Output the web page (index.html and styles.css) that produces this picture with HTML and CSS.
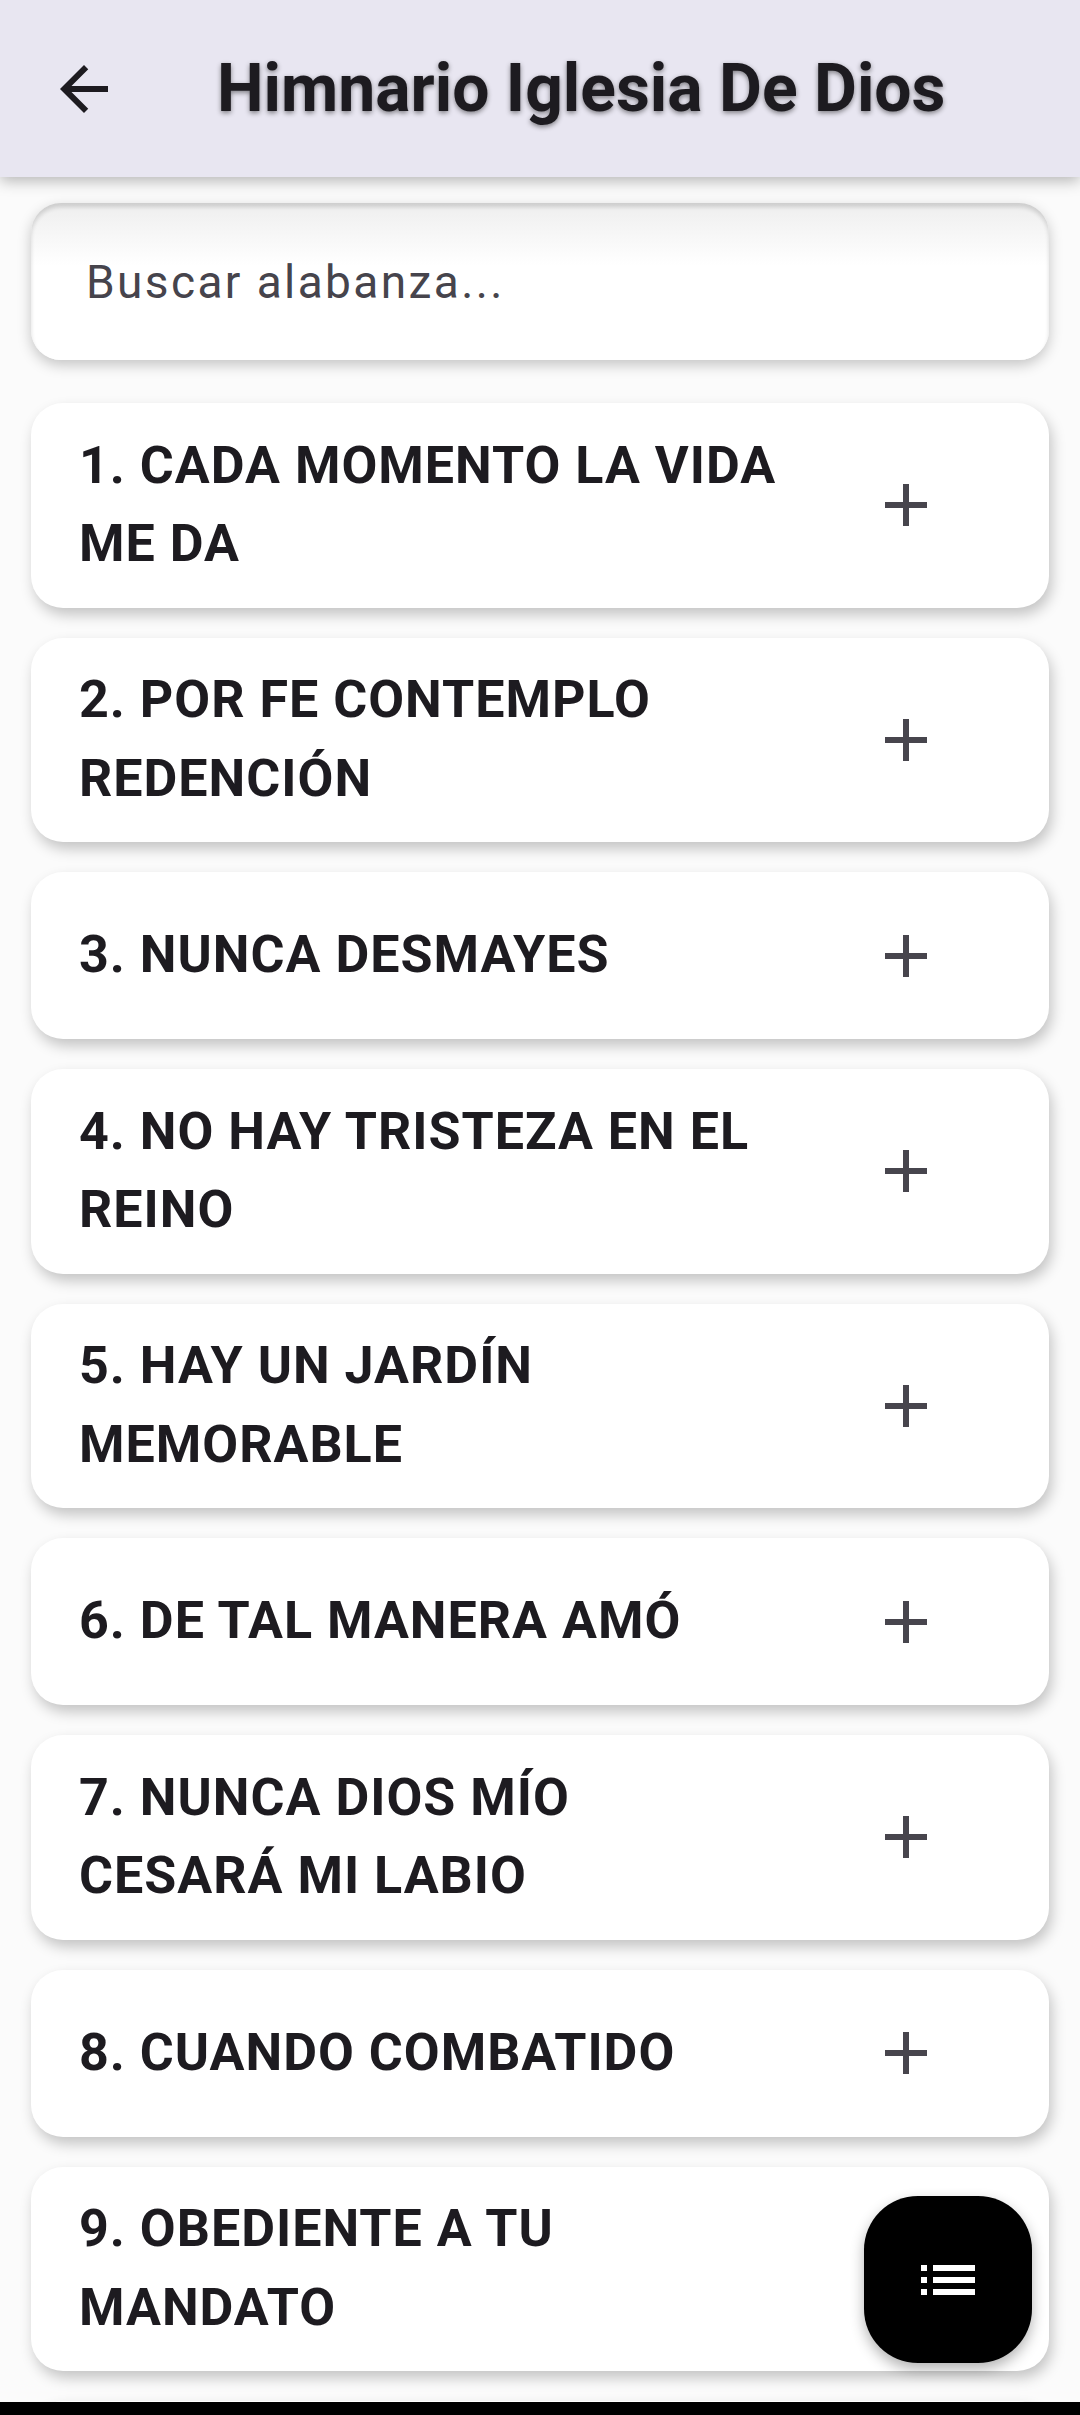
FILE: index.html
```html
<!DOCTYPE html>
<html lang="es">
<head>
<meta charset="utf-8">
<title>Himnario Iglesia De Dios</title>
<link rel="stylesheet" href="styles.css">
</head>
<body>
<header class="appbar">
  <button class="back" aria-label="Volver">
    <svg viewBox="0 0 24 24" width="72" height="72"><path d="M20 11H7.83l5.59-5.59L12 4l-8 8 8 8 1.41-1.41L7.83 13H20v-2z" fill="#1d1b20"/></svg>
  </button>
  <h1 class="title">Himnario Iglesia De Dios</h1>
</header>
<main class="content">
  <div class="search">
    <span class="placeholder">Buscar alabanza...</span>
  </div>
  <ul class="list">
    <li class="card"><span class="name">1. CADA MOMENTO LA VIDA ME DA</span><svg class="plus" viewBox="0 0 24 24"><path d="M19 13h-6v6h-2v-6H5v-2h6V5h2v6h6v2z"/></svg></li>
    <li class="card"><span class="name">2. POR FE CONTEMPLO REDENCIÓN</span><svg class="plus" viewBox="0 0 24 24"><path d="M19 13h-6v6h-2v-6H5v-2h6V5h2v6h6v2z"/></svg></li>
    <li class="card"><span class="name">3. NUNCA DESMAYES</span><svg class="plus" viewBox="0 0 24 24"><path d="M19 13h-6v6h-2v-6H5v-2h6V5h2v6h6v2z"/></svg></li>
    <li class="card"><span class="name">4. NO HAY TRISTEZA EN EL REINO</span><svg class="plus" viewBox="0 0 24 24"><path d="M19 13h-6v6h-2v-6H5v-2h6V5h2v6h6v2z"/></svg></li>
    <li class="card"><span class="name">5. HAY UN JARDÍN MEMORABLE</span><svg class="plus" viewBox="0 0 24 24"><path d="M19 13h-6v6h-2v-6H5v-2h6V5h2v6h6v2z"/></svg></li>
    <li class="card"><span class="name">6. DE TAL MANERA AMÓ</span><svg class="plus" viewBox="0 0 24 24"><path d="M19 13h-6v6h-2v-6H5v-2h6V5h2v6h6v2z"/></svg></li>
    <li class="card"><span class="name">7. NUNCA DIOS MÍO CESARÁ MI LABIO</span><svg class="plus" viewBox="0 0 24 24"><path d="M19 13h-6v6h-2v-6H5v-2h6V5h2v6h6v2z"/></svg></li>
    <li class="card"><span class="name">8. CUANDO COMBATIDO</span><svg class="plus" viewBox="0 0 24 24"><path d="M19 13h-6v6h-2v-6H5v-2h6V5h2v6h6v2z"/></svg></li>
    <li class="card"><span class="name">9. OBEDIENTE A TU MANDATO</span><svg class="plus" viewBox="0 0 24 24"><path d="M19 13h-6v6h-2v-6H5v-2h6V5h2v6h6v2z"/></svg></li>
    <li class="card card-empty"></li>
  </ul>
</main>
<button class="fab" aria-label="Índice">
  <svg viewBox="0 0 24 24" width="72" height="72"><path d="M3 13h2v-2H3v2zm0 4h2v-2H3v2zm0-8h2V7H3v2zm4 4h14v-2H7v2zm0 4h14v-2H7v2zM7 7v2h14V7H7z" fill="#fff"/></svg>
</button>
<div class="navbar"></div>
</body>
</html>
```
FILE: styles.css
```css
html, body {
  margin: 0;
  padding: 0;
}
body {
  background: #fbfbfb;
  font-family: Roboto, "Noto Sans", "Liberation Sans", sans-serif;
  color: #1d1b20;
  height: 2415px;
  overflow: hidden;
}
.appbar {
  position: relative;
  z-index: 2;
  height: 177px;
  background: #e8e6f1;
  display: flex;
  align-items: center;
  box-shadow: 0 4px 14px rgba(0, 0, 0, 0.28);
}
.back {
  margin-left: 48px;
  width: 72px;
  height: 72px;
  padding: 0;
  border: 0;
  background: transparent;
  display: flex;
}
.title {
  margin: 0 0 0 97px;
  font-size: 66px;
  font-weight: 700;
  letter-spacing: 0;
  color: #1d1b20;
  text-shadow: 0 2px 5px rgba(0, 0, 0, 0.45);
  line-height: 1;
}
.content {
  padding: 26px 31px 0;
}
.search {
  height: 157px;
  background: linear-gradient(#eeeeee, #ffffff 40%);
  border-radius: 30px;
  display: flex;
  align-items: center;
  padding-left: 55px;
  box-shadow: 0 5px 14px rgba(0, 0, 0, 0.22), inset 0 4px 4px rgba(0, 0, 0, 0.14);
}
.placeholder {
  font-size: 46px;
  letter-spacing: 2.4px;
  color: #46444c;
}
.list {
  list-style: none;
  margin: 43px 0 0;
  padding: 0;
  display: flex;
  flex-direction: column;
  gap: 30px;
}
.card {
  background: #fff;
  border-radius: 32px;
  min-height: 167px;
  box-sizing: border-box;
  padding: 23.5px 107px 23.5px 48px;
  display: flex;
  align-items: center;
  gap: 88px;
  box-shadow: 3px 7px 14px rgba(0, 0, 0, 0.22);
}
.name {
  flex: 1;
  font-size: 52px;
  font-weight: 700;
  letter-spacing: 1px;
  line-height: 78.75px;
  color: #1d1b20;
}
.plus {
  width: 72px;
  height: 72px;
  flex: none;
  fill: #47454d;
}
.fab {
  position: fixed;
  right: 48px;
  bottom: 52px;
  width: 168px;
  height: 167px;
  border: 0;
  padding: 0;
  border-radius: 54px;
  background: #000;
  display: flex;
  align-items: center;
  justify-content: center;
  box-shadow: 0 6px 14px rgba(0, 0, 0, 0.3);
  z-index: 3;
}
.navbar {
  position: fixed;
  left: 0;
  right: 0;
  bottom: 0;
  height: 13px;
  background: #000;
  z-index: 4;
}
```
